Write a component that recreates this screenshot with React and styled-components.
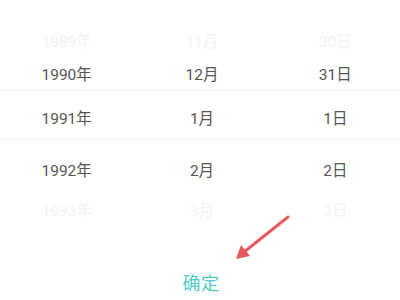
import React from 'react'
import styled, { createGlobalStyle } from 'styled-components'

const Global = createGlobalStyle`
  html, body {
    margin: 0;
    padding: 0;
    background: #ffffff;
  }
  body {
    font-family: Roboto, "Noto Sans CJK SC", sans-serif;
  }
`

const Screen = styled.div`
  position: relative;
  width: 400px;
  height: 300px;
  overflow: hidden;
  background: #fff;
  display: flex;
  flex-direction: column;
`

const Wheel = styled.div`
  padding-top: 24px;
  display: flex;
  flex-direction: column;
`

const Row = styled.div`
  display: grid;
  grid-template-columns: 1fr 1fr 1fr;
  height: ${p => p.h}px;
  padding-top: ${p => p.offset || 0}px;
  box-sizing: border-box;
  align-items: center;
  border-top: ${p => (p.selected ? '1px solid #efefef' : 'none')};
  border-bottom: ${p => (p.selected ? '1px solid #efefef' : 'none')};
`

const Cell = styled.div`
  text-align: center;
  font-size: 15.5px;
  color: ${p => (p.faded ? '#f3f3f3' : '#555555')};
  padding-left: ${p => p.shift || 0}px;
`

const Footer = styled.div`
  flex: 1;
  display: flex;
  align-items: flex-end;
  justify-content: center;
  padding-bottom: 5px;
`

const Confirm = styled.button`
  border: none;
  background: none;
  padding: 0;
  margin-left: 2px;
  font-family: "Noto Sans CJK SC", sans-serif;
  font-size: 18px;
  color: #4fcdc4;
  letter-spacing: 0.5px;
`

const Arrow = styled.svg`
  position: absolute;
  left: 228px;
  top: 208px;
`

const rows = [
  { y: '1989年', m: '11月', d: '30日', faded: true, h: 32 },
  { y: '1990年', m: '12月', d: '31日', h: 33 },
  { y: '1991年', m: '1月', d: '1日', h: 51, selected: true, offset: 4 },
  { y: '1992年', m: '2月', d: '2日', h: 58 },
  { y: '1993年', m: '3月', d: '3日', faded: true, h: 18 },
]

export default function App() {
  return (
    <Screen>
      <Global />
      <Wheel>
        {rows.map(r => (
          <Row key={r.y} h={r.h} selected={r.selected} offset={r.offset}>
            <Cell faded={r.faded}>{r.y}</Cell>
            <Cell faded={r.faded} shift={4}>{r.m}</Cell>
            <Cell faded={r.faded} shift={4}>{r.d}</Cell>
          </Row>
        ))}
      </Wheel>
      <Footer>
        <Confirm>确定</Confirm>
      </Footer>
      <Arrow width="70" height="60" viewBox="0 0 70 60">
        <line x1="60" y1="9" x2="16" y2="44" stroke="#e85a5a" strokeWidth="3" strokeLinecap="round" />
        <polygon points="8,51 13,37 22,48" fill="#e85a5a" />
      </Arrow>
    </Screen>
  )
}
